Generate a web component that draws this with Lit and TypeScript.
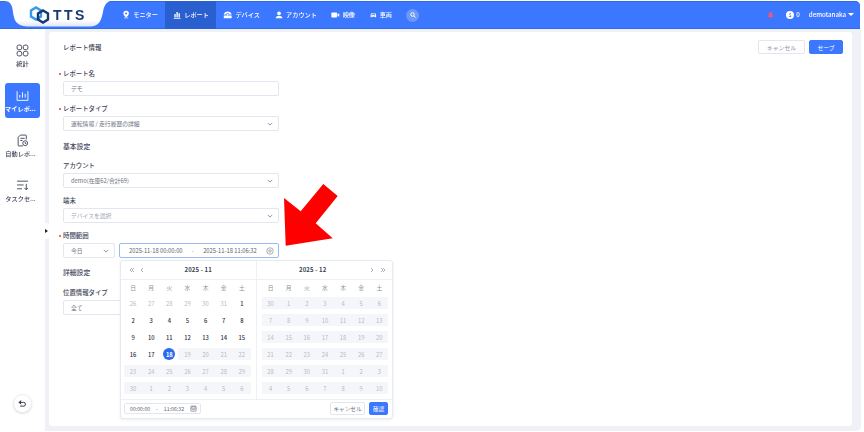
import { LitElement, html, css, svg } from "lit";
import { customElement } from "lit/decorators.js";

const WD = ["日", "月", "火", "水", "木", "金", "土"];
type Cell = { d: number; k: string };

const left: Cell[] = [
  ...[26, 27, 28, 29, 30, 31].map((d) => ({ d, k: "off" })),
  ...Array.from({ length: 17 }, (_, i) => ({ d: i + 1, k: "on" })),
  { d: 18, k: "sel" },
  ...[19, 20, 21, 22, 23, 24, 25, 26, 27, 28, 29, 30, 1, 2, 3, 4, 5, 6].map((d) => ({ d, k: "band" })),
];
const right: Cell[] = [
  30,
  ...Array.from({ length: 31 }, (_, i) => i + 1),
  1, 2, 3, 4, 5, 6, 7, 8, 9, 10,
].map((d) => ({ d, k: "band" }));

const icon = (w: number, h: number, body: unknown, cls = "") =>
  html`<svg class=${cls} width=${w} height=${h} viewBox="0 0 24 24" fill="currentColor">${body}</svg>`;

const navIcons = {
  pin: svg`<path d="M12 1a8 8 0 0 0-8 8c0 5 5 9 8 11 3-2 8-6 8-11a8 8 0 0 0-8-8zm0 5a3 3 0 1 1 0 6 3 3 0 0 1 0-6z"/><rect x="6" y="21" width="12" height="2"/>`,
  bars: svg`<path d="M2 21h20v2H2zM4 9h4v10H4zM10 3h4v16h-4zM16 7h4v12h-4z"/>`,
  dev: svg`<path d="M12 3C7 3 3 6 2 11h6a4 4 0 0 1 8 0h6c-1-5-5-8-10-8zM2 13h20v7H2z"/><circle cx="12" cy="11" r="2.4"/>`,
  user: svg`<circle cx="12" cy="7" r="5.5"/><path d="M2 22c0-5 4-8 10-8s10 3 10 8z"/>`,
  video: svg`<rect x="1" y="5" width="16" height="14" rx="2"/><path d="M18 10l5-3v10l-5-3z"/>`,
  car: svg`<path d="M5 5h14l3 7v8h-4v-2H6v2H2v-8zm1.5 2L5 11h14l-1.5-4z"/><circle cx="7" cy="14.500" r="1.500" fill="#3c78ff"/><circle cx="17" cy="14.500" r="1.500" fill="#3c78ff"/>`,
};

const nav = [
  { t: "モニター", i: navIcons.pin, w: 9, c: "n1" },
  { t: "レポート", i: navIcons.bars, w: 10, c: "n2 active" },
  { t: "デバイス", i: navIcons.dev, w: 10, c: "n3" },
  { t: "アカウント", i: navIcons.user, w: 10, c: "n4" },
  { t: "映像", i: navIcons.video, w: 10, c: "n5" },
  { t: "車両", i: navIcons.car, w: 10, c: "n6" },
];

const chevron = html`<svg class="chev" width="6" height="4" viewBox="0 0 8 5" fill="none" stroke="currentColor" stroke-width="1.100"><path d="M1 1l3 3 3-3"/></svg>`;

const sideStroke = (body: unknown) =>
  html`<svg width="13" height="13" viewBox="0 0 24 24" fill="none" stroke="currentColor" stroke-width="1.700">${body}</svg>`;

@customElement("app-root")
export class AppRoot extends LitElement {
  static styles = css`
    :host {
      display: block;
      width: 864px;
      height: 432px;
      overflow: hidden;
      background: #fff;
      font-family: "Noto Sans CJK JP", "Noto Sans", sans-serif;
      color: #3a4256;
      font-size: 6.4px;
    }
    .root { width: 861px; height: 431px; padding-top: 1px; box-sizing: border-box; display: flex; flex-direction: column; filter: blur(0.3px); }
    header {
      height: 27.500px; width: 860px; background: #3c78ff; border-top-right-radius: 5px; display: flex; align-items: stretch;
      color: #fff; box-shadow: inset 0 -1px 0 #2f6be8, inset 0 1px 0 #2f6be8; flex: none;
    }
    .logo { width: 110px; height: 27.500px; position: relative; flex: none; margin-right: 4px; }
    .logo svg.shape { position: absolute; left: 0; top: 0; }
    .logo svg.mark { position: absolute; left: 29px; top: 4.500px; }
    .tts { position: absolute; left: 53px; top: 4px; font: 700 14px/20px "Liberation Sans", sans-serif; letter-spacing: 2.400px; color: #16396f; }
    .nav { display: flex; align-items: stretch; }
    .item { display: flex; align-items: center; gap: 3px; font-size: 6.200px; white-space: nowrap; padding: 0 7px; font-weight: 500; }
    .item.active { background: #2a5fcf; }
    .n1 { width: 51px; box-sizing: border-box; padding-left: 8px; }
    .n2 { width: 51px; box-sizing: border-box; padding-left: 8px; }
    .n3 { width: 51px; box-sizing: border-box; padding-left: 7px; }
    .n4 { width: 57px; box-sizing: border-box; padding-left: 8px; }
    .n5 { width: 38px; box-sizing: border-box; padding-left: 7px; }
    .n6 { width: 37px; box-sizing: border-box; padding-left: 8px; }
    .search { width: 13px; height: 13px; border-radius: 50%; background: #6d98f8; margin: 7.500px 0 0 7px; display: flex; align-items: center; justify-content: center; }
    .hright { margin-left: auto; display: flex; align-items: center; padding-right: 6px; font-size: 6.200px; font-weight: 500; }
    .bell { color: #e8577e; margin-right: 12px; display: flex; }
    .coin { width: 8px; height: 8px; background: #fff; color: #3c78ff; border-radius: 50%; font-size: 5px; line-height: 8px; text-align: center; font-weight: 700; margin-right: 2px; }
    .zero { margin-right: 9px; }
    .caret { width: 0; height: 0; border: 3px solid transparent; border-top: 3.500px solid #fff; border-bottom: 0; margin-left: 2px; }
    .body { flex: 1; display: flex; min-height: 0; }
    aside { width: 45px; flex: none; display: flex; flex-direction: column; align-items: center; padding-top: 9.500px; box-sizing: border-box; position: relative; font-size: 6.200px; font-weight: 500; color: #3f4659; }
    .side { width: 35px; height: 35px; border-radius: 3px; display: flex; flex-direction: column; align-items: center; justify-content: center; gap: 2px; white-space: nowrap; margin-bottom: 10px; }
    .side span { line-height: 9px; padding-right: 4px; }
    .side .short { padding-right: 0; }
    .side.on { background: #3c78ff; color: #fff; font-weight: 700; }
    .back { position: absolute; left: 13px; top: 365.500px; width: 19px; height: 19px; box-sizing: border-box; border-radius: 50%; background: #fff; border: 1px solid #ececf0; box-shadow: 0 1px 2px rgba(0, 0, 0, .12); display: flex; align-items: center; justify-content: center; color: #2c3242; }
    .toggle { position: absolute; left: 45px; top: 194px; width: 4px; height: 16px; background: #fff; border-radius: 0 3px 3px 0; display: flex; align-items: center; z-index: 2; }
    .toggle::after { content: ""; border: 2px solid transparent; border-left: 3px solid #1d2333; border-right: 0; }
    main { flex: 1; background: #f0f1f6; border-bottom-right-radius: 5px; padding: 3.500px 9px 5.500px 4px; min-width: 0; }
    .card { background: #fff; border-radius: 3px; height: 100%; box-sizing: border-box; position: relative; padding: 8px 9px 0 14px; }
    .top { display: flex; align-items: center; justify-content: space-between; height: 14px; margin-bottom: 14px; }
    .title { font-size: 6.400px; font-weight: 500; }
    .btns { display: flex; gap: 4px; }
    .btn { height: 14px; box-sizing: border-box; border-radius: 2px; border: 1px solid #e3e6ef; color: #666d7d; background: #fff; font-size: 5.800px; display: flex; align-items: center; justify-content: center; }
    .btn.c { width: 47px; }
    .btn.s { width: 34px; background: #3c78ff; border-color: #3c78ff; color: #fff; }
    .form { width: 216px; display: flex; flex-direction: column; }
    .field { margin-bottom: 7px; }
    label { display: block; height: 10px; line-height: 12px; margin-bottom: 3px; font-size: 6.400px; font-weight: 500; position: relative; color: #3f4659; white-space: nowrap; }
    label.req::before { content: ""; position: absolute; left: -4px; top: 5px; width: 2px; height: 2px; border-radius: 50%; background: #e8384f; }
    h3 { margin: 3px 0 9px; height: 10px; line-height: 10px; font-size: 6.800px; font-weight: 500; color: #3f4659; }
    h3.second { margin-top: 2px; margin-bottom: 10px; }
    .input { height: 15px; box-sizing: border-box; border: 1px solid #e3e6ef; border-radius: 2px; display: flex; align-items: center; justify-content: space-between; padding: 0 5px 0 7px; font-size: 5.800px; color: #6b7080; background: #fff; white-space: nowrap; }
    .ph { color: #a0a4b0; }
    .chev { color: #7c8290; flex: none; }
    .timerow { display: flex; gap: 4px; }
    .today { width: 52px; flex: none; }
    .range { flex: 1; border-color: #9db9f2; padding: 0 4px 0 9px; font-size: 5.800px; color: #5c6272; }
    .range .dash { color: #8a8f9c; }
    .clear { color: #7c8290; display: flex; }
    .pop { position: absolute; left: 70.500px; top: 227.500px; width: 273px; height: 159.500px; box-sizing: border-box; background: #fff; border: 1px solid #e8eaf2; border-radius: 3px; box-shadow: 0 1px 3px rgba(30, 40, 80, .08); display: flex; flex-direction: column; z-index: 1; }
    .panels { display: flex; flex: 1; min-height: 0; }
    .panel { display: flex; flex-direction: column; }
    .panel.l { width: 135.500px; border-right: 1px solid #eef0f5; }
    .panel.r { flex: 1; }
    .phead { height: 18px; display: flex; align-items: center; border-bottom: 1px solid #eef0f5; flex: none; color: #8b909c; }
    .l .phead { padding: 0 6px 0 8px; }
    .r .phead { padding: 0 6px 0 6px; }
    .arrows { display: flex; align-items: center; gap: 5px; width: 18px; flex: none; }
    .r .arrows { justify-content: flex-end; width: 23px; gap: 6px; }
    .month { flex: 1; text-align: center; font-weight: 700; font-size: 6px; color: #3a4256; letter-spacing: .15px; }
    .grid { display: grid; grid-template-columns: repeat(7, 18.140px); grid-template-rows: 15px; grid-auto-rows: 17px; }
    .l .grid { padding-left: 3.500px; }
    .r .grid { padding-left: 4.500px; }
    .wd, .c { display: flex; align-items: center; justify-content: center; font-size: 5.800px; color: #8b909c; position: relative; z-index: 0; }
    .c.off { color: #b6bac4; }
    .c.on { color: #2c3242; font-weight: 500; }
    .c.band { color: #b6bac4; }
    .c.band::before { content: ""; position: absolute; left: 0; right: 0; top: 2.500px; height: 12px; background: #f5f6fa; z-index: -1; }
    .c.sel { color: #fff; font-weight: 700; }
    .c.sel::before { content: ""; position: absolute; left: 3.070px; top: 2.500px; width: 12px; height: 12px; border-radius: 50%; background: #2a6bf2; z-index: -1; }
    .pfoot { height: 19.500px; border-top: 1px solid #eef0f5; display: flex; align-items: center; padding: 0 3.500px; gap: 4px; flex: none; box-sizing: border-box; }
    .tbox { width: 77px; height: 11px; box-sizing: border-box; border: 1px solid #e3e6ef; border-radius: 2px; display: flex; align-items: center; justify-content: space-between; padding: 0 3px 0 5px; font-size: 5.200px; color: #5c6272; }
    .pfoot .btn { height: 13px; font-size: 5.600px; }
    .pfoot .c1 { width: 35px; margin-left: auto; }
    .pfoot .s1 { width: 19px; background: #3c78ff; border-color: #3c78ff; color: #fff; }
    .arrow { position: absolute; left: 0; top: 0; z-index: 3; pointer-events: none; }
  `;

  private cal(cells: Cell[]) {
    return html`<div class="grid">
      ${WD.map((w) => html`<div class="wd">${w}</div>`)}
      ${cells.map((c) => html`<div class="c ${c.k}">${c.d}</div>`)}
    </div>`;
  }

  render() {
    return html`<div class="root">
      <header>
        <div class="logo">
          <svg class="shape" width="110" height="28" viewBox="0 0 110 28">
            <defs><linearGradient id="lg" x1="0" y1="0" x2="0" y2="1"><stop offset="0" stop-color="#fff"/><stop offset=".75" stop-color="#fff"/><stop offset="1" stop-color="#dfe6f4"/></linearGradient></defs>
            <path d="M4 0C11 0 12 4 13 11 14 20 17 25 27 25.500L91 25.500C99 25 101 20 103 11 104 4 107 1 110 0Z" fill="url(#lg)"/>
          </svg>
          <svg class="mark" width="22" height="18" viewBox="0 0 22 18" fill="none">
            <path d="M7 1.500l5 3v6l-5 3-5-3v-6z" stroke="#2f9bef" stroke-width="2.400"/>
            <path d="M14 4.500l5 3v6l-5 3-5-3v-6z" stroke="#16396f" stroke-width="2.400"/>
          </svg>
          <span class="tts">TTS</span>
        </div>
        <nav class="nav">
          ${nav.map((n) => html`<div class="item ${n.c}">${icon(n.w, n.w, n.i)}<span>${n.t}</span></div>`)}
          <div class="search"><svg width="6" height="6" viewBox="0 0 12 12" fill="none" stroke="#fff" stroke-width="2"><circle cx="5" cy="5" r="3.500"/><path d="M8 8l3 3"/></svg></div>
        </nav>
        <div class="hright">
          <span class="bell">${icon(7, 8, svg`<path d="M12 1c-1.500 0-2 1-2 2C6 4 5 8 5 11c0 4-2 6-3 8h20c-1-2-3-4-3-8 0-3-1-7-5-8 0-1-.5-2-2-2zM9 20.500a3 3 0 0 0 6 0z"/>`)}</span>
          <span class="coin">$</span><span class="zero">0</span>
          <span>demotanaka</span><span class="caret"></span>
        </div>
      </header>
      <div class="body">
        <aside>
          <div class="side">
            ${sideStroke(svg`<rect x="2" y="2" width="8.500" height="8.500" rx="3"/><rect x="13.500" y="2" width="8.500" height="8.500" rx="3"/><rect x="2" y="13.500" width="8.500" height="8.500" rx="3"/><rect x="13.500" y="13.500" width="8.500" height="8.500" rx="3"/>`)}
            <span class="short">統計</span>
          </div>
          <div class="side on">
            ${sideStroke(svg`<path d="M2 4v17h20V4M7 16V11M12 16V6M17 16V9"/>`)}
            <span>マイレポ...</span>
          </div>
          <div class="side">
            ${sideStroke(svg`<path d="M13 22H5a1 1 0 0 1-1-1V6l4-4h10a1 1 0 0 1 1 1v7M8 8h8M8 12h4"/><circle cx="17" cy="17" r="4.500"/><path d="M17 15v2.500h2"/>`)}
            <span>自動レポ...</span>
          </div>
          <div class="side">
            ${sideStroke(svg`<path d="M2 4h20M2 11h12M2 18h9M19 9v11M15.500 16.500L19 20l3-3.500"/>`)}
            <span>タスクセ...</span>
          </div>
          <div class="back">
            <svg width="9" height="9" viewBox="0 0 24 24" fill="none" stroke="currentColor" stroke-width="2.600"><path d="M4 9h11a5 5 0 0 1 0 10H6"/><path d="M8 4L3 9l5 5" fill="currentColor"/></svg>
          </div>
          <div class="toggle"></div>
        </aside>
        <main>
          <div class="card">
            <div class="top">
              <div class="title">レポート情報</div>
              <div class="btns"><div class="btn c">キャンセル</div><div class="btn s">セーブ</div></div>
            </div>
            <div class="form">
              <div class="field"><label class="req">レポート名</label><div class="input"><span>デモ</span></div></div>
              <div class="field"><label class="req">レポートタイプ</label><div class="input"><span>運転情報 / 走行履歴の詳細</span>${chevron}</div></div>
              <h3>基本設定</h3>
              <div class="field"><label>アカウント</label><div class="input"><span>demo(在庫62/合計69)</span>${chevron}</div></div>
              <div class="field"><label>端末</label><div class="input"><span class="ph">デバイスを選択</span>${chevron}</div></div>
              <div class="field">
                <label class="req">時間範囲</label>
                <div class="timerow">
                  <div class="input today"><span>今日</span>${chevron}</div>
                  <div class="input range">
                    <span>2025-11-18 00:00:00</span><span class="dash">-</span><span>2025-11-18 11:06:32</span>
                    <span class="clear"><svg width="8" height="8" viewBox="0 0 16 16" fill="none" stroke="currentColor" stroke-width="1.300"><circle cx="8" cy="8" r="6.500"/><circle cx="8" cy="8" r="2.500"/></svg></span>
                  </div>
                </div>
              </div>
              <h3 class="second">詳細設定</h3>
              <div class="field"><label>位置情報タイプ</label><div class="input"><span>全て</span>${chevron}</div></div>
            </div>
            <div class="pop">
              <div class="panels">
                <div class="panel l">
                  <div class="phead">
                    <div class="arrows">
                      <svg width="6" height="6" viewBox="0 0 12 12" fill="none" stroke="currentColor" stroke-width="1.400"><path d="M6 2L2 6l4 4M10 2L6 6l4 4"/></svg>
                      <svg width="4" height="6" viewBox="0 0 8 12" fill="none" stroke="currentColor" stroke-width="1.400"><path d="M6 2L2 6l4 4"/></svg>
                    </div>
                    <div class="month">2025 - 11</div>
                  </div>
                  ${this.cal(left)}
                </div>
                <div class="panel r">
                  <div class="phead">
                    <div class="month">2025 - 12</div>
                    <div class="arrows">
                      <svg width="4" height="6" viewBox="0 0 8 12" fill="none" stroke="currentColor" stroke-width="1.400"><path d="M2 2l4 4-4 4"/></svg>
                      <svg width="6" height="6" viewBox="0 0 12 12" fill="none" stroke="currentColor" stroke-width="1.400"><path d="M2 2l4 4-4 4M6 2l4 4-4 4"/></svg>
                    </div>
                  </div>
                  ${this.cal(right)}
                </div>
              </div>
              <div class="pfoot">
                <div class="tbox">
                  <span>00:00:00</span><span>-</span><span>11:06:32</span>
                  <svg width="7" height="7" viewBox="0 0 16 16" fill="none" stroke="currentColor" stroke-width="1.400"><rect x="2" y="3" width="12" height="11" rx="1"/><path d="M2 7h12M5 1v3M11 1v3M5 10h6"/></svg>
                </div>
                <div class="btn c1">キャンセル</div>
                <div class="btn s1">確認</div>
              </div>
            </div>
          </div>
        </main>
      </div>
      <svg class="arrow" width="864" height="432" viewBox="0 0 864 432"><polygon points="284,198 300.700,211.300 323.300,184 337.700,196 315.700,223.300 332.700,238.300 285.700,245.700" fill="#f00"/></svg>
    </div>`;
  }
}
